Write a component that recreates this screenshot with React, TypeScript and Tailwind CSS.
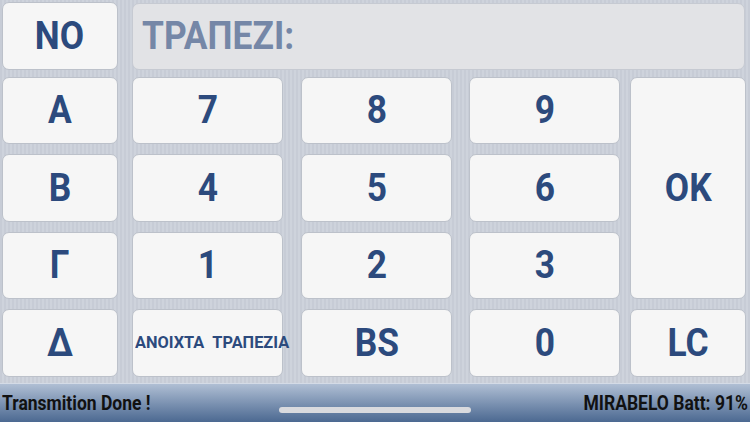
const keyBtn =
  "flex items-center justify-center rounded-[7px] border border-[#bcc1ca] bg-[#f6f6f6] text-[#2c4a7d] font-bold";

function Key({ label, className = "" }: { label: string; className?: string }) {
  return (
    <div className={`${keyBtn} text-[38px] ${className}`}>
      <span className="inline-block scale-x-[0.93]">{label}</span>
    </div>
  );
}

export default function App() {
  return (
    <div
      className="relative w-[750px] h-[422px] overflow-hidden flex flex-col bg-[repeating-linear-gradient(90deg,#c7ccd6_0px,#c7ccd6_2px,#ced3dc_2px,#ced3dc_4px)]"
      style={{ fontFamily: "Roboto, 'Liberation Sans', sans-serif" }}
    >
      {/* top row */}
      <div className="flex h-[68px] mt-[2px] pl-[2px]">
        <Key label="NO" className="w-[116px] h-[68px]" />
        <div className="ml-[14px] mt-[1px] w-[613px] h-[67px] rounded-[7px] border border-[#c6cad2] bg-[#e2e3e6] flex items-center pl-[9px] text-[38px] font-bold text-[#7587a7]">
          <span className="inline-block origin-left scale-x-[0.93]">ΤΡΑΠΕΖΙ:</span>
        </div>
      </div>

      {/* keypad */}
      <div className="mt-[7px] pl-[2px] grid grid-cols-[130px_169px_168px_161px_116px] grid-rows-[67px_68px_67px_68px] gap-y-[10px]">
        <Key label="Α" className="w-[116px]" />
        <Key label="7" className="w-[151px]" />
        <Key label="8" className="w-[151px]" />
        <Key label="9" className="w-[151px]" />
        <Key label="OK" className="w-[116px] row-span-3" />

        <Key label="Β" className="w-[116px]" />
        <Key label="4" className="w-[151px]" />
        <Key label="5" className="w-[151px]" />
        <Key label="6" className="w-[151px]" />

        <Key label="Γ" className="w-[116px]" />
        <Key label="1" className="w-[151px]" />
        <Key label="2" className="w-[151px]" />
        <Key label="3" className="w-[151px]" />

        <Key label="Δ" className="w-[116px]" />
        <div className={`${keyBtn} w-[151px] text-[17px] whitespace-pre justify-start pl-[2px] overflow-visible`}>
          <span className="inline-block origin-left scale-x-[0.96]">ΑΝΟΙΧΤΑ  ΤΡΑΠΕΖΙΑ</span>
        </div>
        <Key label="BS" className="w-[151px]" />
        <Key label="0" className="w-[151px]" />
        <Key label="LC" className="w-[116px]" />
      </div>

      {/* status bar */}
      <div className="mt-auto h-[39px] border-t border-[#d4dbe6] bg-gradient-to-b from-[#b0bfd4] to-[#4c6991] flex items-center justify-between px-[2px] text-[20px] font-bold text-[#111111]">
        <span className="inline-block origin-left scale-x-[0.875] whitespace-nowrap">Transmition Done !</span>
        <span className="inline-block origin-right scale-x-[0.875] whitespace-nowrap">MIRABELO Batt: 91%</span>
      </div>

      {/* home indicator */}
      <div className="absolute left-[279px] top-[407px] w-[192px] h-[6px] rounded-full bg-[#d9dade]" />
    </div>
  );
}
